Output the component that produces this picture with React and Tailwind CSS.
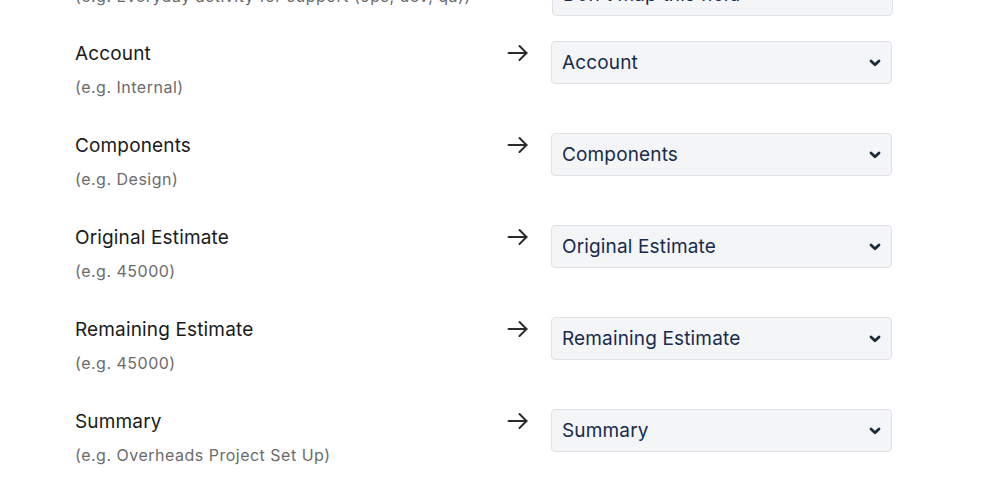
import React from "react";

const rows = [
  { label: "Account", hint: "(e.g. Internal)", value: "Account" },
  { label: "Components", hint: "(e.g. Design)", value: "Components" },
  { label: "Original Estimate", hint: "(e.g. 45000)", value: "Original Estimate" },
  { label: "Remaining Estimate", hint: "(e.g. 45000)", value: "Remaining Estimate" },
  { label: "Summary", hint: "(e.g. Overheads Project Set Up)", value: "Summary" },
];

function Arrow() {
  return (
    <svg width="22" height="18" viewBox="0 0 22 18" fill="none" stroke="#2b2b2b" strokeWidth="2" strokeLinecap="round" strokeLinejoin="round">
      <path d="M1.5 9h18" />
      <path d="M12.5 2l7 7-7 7" />
    </svg>
  );
}

function Chevron() {
  return (
    <svg width="12" height="8" viewBox="0 0 12 8" fill="none" stroke="#1f2a3d" strokeWidth="2.8" strokeLinecap="round" strokeLinejoin="round">
      <path d="M2 2l4 3.8L10 2" />
    </svg>
  );
}

function Select({ value }) {
  return (
    <div className="w-[341px] h-[43px] rounded-[4px] border border-[#dfe1e6] bg-[#f4f5f7] flex items-center justify-between pl-[10px] pr-[10px]">
      <span className="text-[19px] text-[#172b4d] leading-none tracking-[0.15px]">{value}</span>
      <Chevron />
    </div>
  );
}

export default function App() {
  return (
    <div
      className="w-[998px] h-[489px] overflow-hidden bg-white"
      style={{ fontFamily: "Inter, 'Noto Sans', sans-serif" }}
    >
      <div className="h-[41px] overflow-hidden flex items-end pl-[75px]">
        <div className="w-[433px] mb-[33px] text-[16px] leading-[24px] tracking-[0.5px] text-[#6b6b6b] whitespace-nowrap">
          (e.g. Everyday activity for support (ops, dev, qa))
        </div>
        <div className="w-[20px]" />
        <div className="ml-[24px] mb-[25px]">
          <Select value="Don't map this field" />
        </div>
      </div>
      {rows.map((r) => (
        <div key={r.label} className="flex items-start pl-[75px] mb-[34px]">
          <div className="w-[433px]">
            <div className="text-[19px] leading-[24px] text-[#1a1a1a] tracking-[0.15px] pt-[1px]">{r.label}</div>
            <div className="mt-[9px] text-[16px] leading-[24px] tracking-[0.5px] text-[#6b6b6b]">{r.hint}</div>
          </div>
          <div className="w-[20px] mt-[3px] -ml-[1px]">
            <Arrow />
          </div>
          <div className="ml-[24px]">
            <Select value={r.value} />
          </div>
        </div>
      ))}
    </div>
  );
}
